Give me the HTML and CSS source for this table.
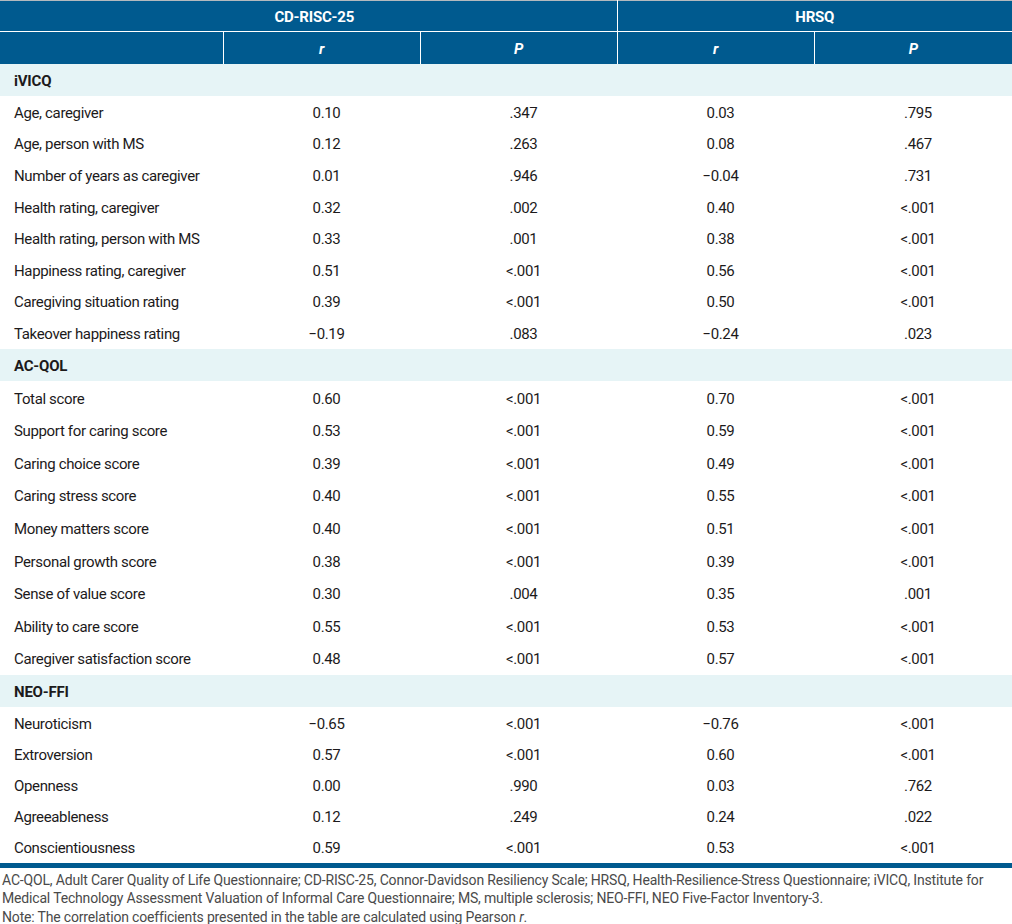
FILE: index.html
```html
<!DOCTYPE html>
<html lang="en">
<head>
<meta charset="utf-8">
<title>Correlations</title>
<link rel="stylesheet" href="styles.css">
</head>
<body>
<div class="wrap">
<table class="corr">
  <colgroup>
    <col class="c-label"><col class="c-num"><col class="c-num"><col class="c-num"><col class="c-last">
  </colgroup>
  <thead>
    <tr class="h1">
      <th colspan="3" class="grp">CD-RISC-25</th>
      <th colspan="2" class="grp sep">HRSQ</th>
    </tr>
    <tr class="h2">
      <th></th>
      <th class="sep"><i>r</i></th>
      <th class="sep"><i>P</i></th>
      <th class="sep"><i>r</i></th>
      <th class="sep"><i>P</i></th>
    </tr>
  </thead>
  <tbody class="s1">
    <tr class="sec"><td colspan="5">iVICQ</td></tr>
    <tr><td>Age, caregiver</td><td>0.10</td><td>.347</td><td>0.03</td><td>.795</td></tr>
    <tr><td>Age, person with MS</td><td>0.12</td><td>.263</td><td>0.08</td><td>.467</td></tr>
    <tr><td>Number of years as caregiver</td><td>0.01</td><td>.946</td><td>−0.04</td><td>.731</td></tr>
    <tr><td>Health rating, caregiver</td><td>0.32</td><td>.002</td><td>0.40</td><td>&lt;.001</td></tr>
    <tr><td>Health rating, person with MS</td><td>0.33</td><td>.001</td><td>0.38</td><td>&lt;.001</td></tr>
    <tr><td>Happiness rating, caregiver</td><td>0.51</td><td>&lt;.001</td><td>0.56</td><td>&lt;.001</td></tr>
    <tr><td>Caregiving situation rating</td><td>0.39</td><td>&lt;.001</td><td>0.50</td><td>&lt;.001</td></tr>
    <tr><td>Takeover happiness rating</td><td>−0.19</td><td>.083</td><td>−0.24</td><td>.023</td></tr>
  </tbody>
  <tbody class="s2">
    <tr class="sec"><td colspan="5">AC-QOL</td></tr>
    <tr><td>Total score</td><td>0.60</td><td>&lt;.001</td><td>0.70</td><td>&lt;.001</td></tr>
    <tr><td>Support for caring score</td><td>0.53</td><td>&lt;.001</td><td>0.59</td><td>&lt;.001</td></tr>
    <tr><td>Caring choice score</td><td>0.39</td><td>&lt;.001</td><td>0.49</td><td>&lt;.001</td></tr>
    <tr><td>Caring stress score</td><td>0.40</td><td>&lt;.001</td><td>0.55</td><td>&lt;.001</td></tr>
    <tr><td>Money matters score</td><td>0.40</td><td>&lt;.001</td><td>0.51</td><td>&lt;.001</td></tr>
    <tr><td>Personal growth score</td><td>0.38</td><td>&lt;.001</td><td>0.39</td><td>&lt;.001</td></tr>
    <tr><td>Sense of value score</td><td>0.30</td><td>.004</td><td>0.35</td><td>.001</td></tr>
    <tr><td>Ability to care score</td><td>0.55</td><td>&lt;.001</td><td>0.53</td><td>&lt;.001</td></tr>
    <tr><td>Caregiver satisfaction score</td><td>0.48</td><td>&lt;.001</td><td>0.57</td><td>&lt;.001</td></tr>
  </tbody>
  <tbody class="s3">
    <tr class="sec"><td colspan="5">NEO-FFI</td></tr>
    <tr><td>Neuroticism</td><td>−0.65</td><td>&lt;.001</td><td>−0.76</td><td>&lt;.001</td></tr>
    <tr><td>Extroversion</td><td>0.57</td><td>&lt;.001</td><td>0.60</td><td>&lt;.001</td></tr>
    <tr><td>Openness</td><td>0.00</td><td>.990</td><td>0.03</td><td>.762</td></tr>
    <tr><td>Agreeableness</td><td>0.12</td><td>.249</td><td>0.24</td><td>.022</td></tr>
    <tr><td>Conscientiousness</td><td>0.59</td><td>&lt;.001</td><td>0.53</td><td>&lt;.001</td></tr>
  </tbody>
</table>
<div class="notes">
  <p>AC-QOL, Adult Carer Quality of Life Questionnaire; CD-RISC-25, Connor-Davidson Resiliency Scale; HRSQ, Health-Resilience-Stress Questionnaire; iVICQ, Institute for<br>Medical Technology Assessment Valuation of Informal Care Questionnaire; MS, multiple sclerosis; NEO-FFI, NEO Five-Factor Inventory-3.</p>
  <p>Note: The correlation coefficients presented in the table are calculated using Pearson <i>r</i>.</p>
</div>
</div>
</body>
</html>
```

FILE: styles.css
```css
html, body {
  margin: 0;
  padding: 0;
  background: #ffffff;
}

body {
  font-family: Roboto, "Liberation Sans", sans-serif;
  color: #1c1a1b;
  width: 1012px;
}

.corr {
  width: 1012px;
  border-collapse: collapse;
  table-layout: fixed;
  border-top: 1px solid #b3b9be;
  border-bottom: 5px solid #005a8f;
  font-size: 15px;
  letter-spacing: -0.35px;
}

.c-label { width: 223px; }
.c-num { width: 197px; }
.c-last { width: 198px; }

.corr thead th {
  background: #005a8f;
  color: #ffffff;
  font-weight: 700;
  text-align: center;
  padding: 2px 0 0 0;
  letter-spacing: -0.2px;
}

.corr thead th.sep {
  border-left: 1px solid #ffffff;
}

.h1 th {
  height: 28px;
  border-bottom: 1px solid #ffffff;
}

.h1 .grp:first-child {
  padding-left: 12px;
}

.h2 th {
  height: 29.5px;
  padding-left: 10px;
}

.corr td {
  padding: 2px 0 0 10px;
  text-align: center;
  white-space: nowrap;
}

.corr td:first-child {
  text-align: left;
  padding-left: 14px;
}

.sec td {
  background: #e6f4f6;
  font-weight: 700;
  height: 30.5px;
  letter-spacing: -0.2px;
}

.s1 tr:not(.sec) td { height: 29.6px; }
.s2 tr:not(.sec) td { height: 30.6px; }
.s3 tr:not(.sec) td { height: 29.1px; }

.notes {
  padding: 3px 0 0 2px;
  color: #4a4a4a;
  font-size: 14px;
  line-height: 18.5px;
  letter-spacing: -0.17px;
}

.notes p {
  margin: 0;
  white-space: nowrap;
}
```
